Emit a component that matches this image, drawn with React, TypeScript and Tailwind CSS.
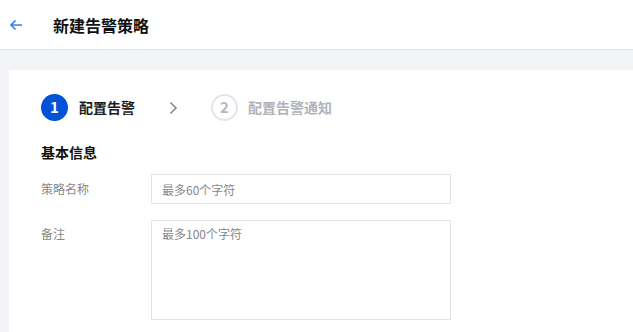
import React from 'react';

const font = "font-['Microsoft_YaHei','Noto_Sans_CJK_SC',sans-serif]";

function Step({ index, label, active }: { index: number; label: string; active?: boolean }) {
  return (
    <div className="flex items-center">
      <div
        className={
          active
            ? 'flex h-[27px] w-[27px] items-center justify-center rounded-full bg-[#0052d9] text-[15px] font-bold text-white'
            : 'flex h-[27px] w-[27px] items-center justify-center rounded-full border-2 border-[#e3e5ea] text-[15px] font-bold text-[#b5b8bf]'
        }
      >
        {index}
      </div>
      <span className={active ? 'ml-[11px] text-[14px] font-bold text-[#1a1a1a]' : 'ml-[10px] text-[14px] font-bold text-[#b0b3ba]'}>
        {label}
      </span>
    </div>
  );
}

export default function App() {
  return (
    <div className={`${font} h-[332px] w-[633px] overflow-hidden bg-[#f3f4f7]`}>
      {/* Header */}
      <div className="flex h-[50px] items-center border-b border-[#e5e6eb] bg-white">
        <svg className="ml-[9px]" width="14" height="12" viewBox="0 0 14 12" fill="none">
          <path d="M13 6H2M6.5 1.5L2 6l4.5 4.5" stroke="#3b7cf0" strokeWidth="1.6" />
        </svg>
        <h1 className="ml-[30px] text-[16px] font-bold text-[#111]">新建告警策略</h1>
      </div>

      {/* Body */}
      <div className="pl-[9px] pt-5">
        <div className="h-[300px] bg-white pl-[32px]">
          <div className="flex items-center pt-[24px]">
            <Step index={1} label="配置告警" active />
            <svg className="ml-[34px] mr-[33px]" width="9" height="14" viewBox="0 0 9 14" fill="none">
              <path d="M1.5 1.5L7 7l-5.5 5.5" stroke="#888" strokeWidth="1.6" />
            </svg>
            <Step index={2} label="配置告警通知" />
          </div>

          <h2 className="mt-[21px] text-[14px] font-bold text-[#111]">基本信息</h2>

          <div className="mt-[11px] flex items-center">
            <label className="w-[110px] text-[12px] text-[#888]">策略名称</label>
            <input
              className="h-[30px] w-[300px] border border-[#e3e4ea] px-[10px] text-[12px] outline-none placeholder:text-[#888]"
              placeholder="最多60个字符"
            />
          </div>

          <div className="mt-[16px] flex items-start">
            <label className="w-[110px] pt-[5px] text-[12px] text-[#888]">备注</label>
            <textarea
              className="h-[100px] w-[300px] resize-none border border-[#e3e4ea] px-[10px] pb-[6px] pt-[4px] text-[12px] outline-none placeholder:text-[#888]"
              placeholder="最多100个字符"
            />
          </div>
        </div>
      </div>
    </div>
  );
}
